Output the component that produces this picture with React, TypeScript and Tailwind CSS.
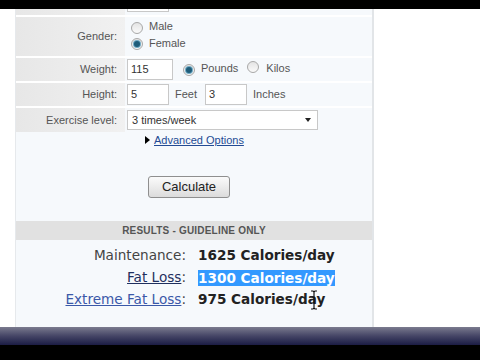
import React from 'react';

const formFont = { fontFamily: '"Liberation Sans", Arial, sans-serif' };
const resFont = { fontFamily: '"DejaVu Sans", Verdana, sans-serif' };

const Radio = ({ checked }: { checked?: boolean }) => (
  <span className="inline-flex w-[12px] h-[12px] rounded-full border border-[#a8a8a8] bg-gradient-to-b from-[#e4e4e4] to-[#fafafa] items-center justify-center shrink-0">
    {checked && <span className="w-[6px] h-[6px] rounded-full bg-[#1f5d7a] ring-1 ring-[#6fa9c4]" />}
  </span>
);

const Label = ({ children, h }: { children: React.ReactNode; h: string }) => (
  <div className={`w-[109px] ${h} shrink-0 bg-gradient-to-r from-[#e7e7e7] to-[#f1f1f1] flex items-center justify-end pr-[8px] text-[11px] text-[#555]`}>
    {children}
  </div>
);

export default function App() {
  return (
    <div className="w-[480px] h-[360px] bg-white flex flex-col overflow-hidden relative" style={formFont}>
      <div className="h-[9px] bg-black shrink-0" />
      <div className="flex flex-1 min-h-0">
        <div className="w-[15px] shrink-0" />
        <div className="w-[359px] bg-[#f6f9fc] border-l border-[#e6e9ec] border-r-2 border-r-[#e2e5e8] flex flex-col">
          {/* previous row tail */}
          <div className="flex border-b-2 border-white">
            <Label h="h-[6px]">{''}</Label>
            <div className="pl-[2px]">
              <div className="w-[42px] h-[3px] border border-t-0 border-[#c8c8c8] bg-white" />
            </div>
          </div>
          {/* gender */}
          <div className="flex border-b-2 border-white">
            <Label h="h-[39px]">Gender:</Label>
            <div className="flex flex-col justify-center pl-[6px] gap-[2px] text-[11px] text-[#555]">
              <div className="flex items-center gap-[6px]"><Radio /><span className="-mt-[4px]">Male</span></div>
              <div className="flex items-center gap-[6px]"><Radio checked /><span className="-mt-[2px]">Female</span></div>
            </div>
          </div>
          {/* weight */}
          <div className="flex border-b-2 border-white">
            <Label h="h-[23px]">Weight:</Label>
            <div className="flex items-center pl-[2px] text-[11px] text-[#555]">
              <div className="w-[46px] h-[21px] border border-[#c8c8c8] bg-white pl-[3px] flex items-center text-[#333]">115</div>
              <span className="ml-[10px]"><Radio checked /></span>
              <span className="ml-[6px] -mt-[2px]">Pounds</span>
              <span className="ml-[9px]"><Radio /></span>
              <span className="ml-[7px] -mt-[2px]">Kilos</span>
            </div>
          </div>
          {/* height */}
          <div className="flex border-b-2 border-white">
            <Label h="h-[23px]">Height:</Label>
            <div className="flex items-center pl-[2px] text-[11px] text-[#555]">
              <div className="w-[42px] h-[21px] border border-[#c8c8c8] bg-white pl-[3px] flex items-center text-[#333]">5</div>
              <span className="ml-[6px]">Feet</span>
              <div className="ml-[8px] w-[42px] h-[21px] border border-[#c8c8c8] bg-white pl-[3px] flex items-center text-[#333]">3</div>
              <span className="ml-[6px]">Inches</span>
            </div>
          </div>
          {/* exercise */}
          <div className="flex">
            <Label h="h-[24px]">Exercise level:</Label>
            <div className="flex items-center pl-[2px] text-[11px] text-[#333]">
              <div className="w-[191px] h-[20px] border border-[#c8c8c8] bg-white pl-[4px] pr-[6px] flex items-center justify-between">
                <span>3 times/week</span>
                <span className="w-0 h-0 border-l-[3px] border-r-[3px] border-t-[4px] border-l-transparent border-r-transparent border-t-[#222]" />
              </div>
            </div>
          </div>
          <div className="flex items-center pl-[129px] text-[11px]">
            <span className="w-0 h-0 border-t-[4px] border-b-[4px] border-l-[5px] border-t-transparent border-b-transparent border-l-black" />
            <span className="ml-[4px] text-[#234b94] underline">Advanced Options</span>
          </div>
          <div className="flex justify-center mt-[27px] pr-[10px]">
            <div className="w-[82px] h-[22px] rounded-[3px] border border-[#8f8f8f] bg-gradient-to-b from-[#fbfbfb] to-[#dcdcdc] flex items-center justify-center text-[13px] text-[#222]">
              Calculate
            </div>
          </div>
          <div className="mt-[23px] h-[19px] bg-[#e1e1e1] flex items-center justify-center text-[10px] font-bold text-[#555] tracking-[0.2px]">
            RESULTS - GUIDELINE ONLY
          </div>
          <div className="mt-[5px] flex flex-col text-[13.6px]" style={resFont}>
            <div className="flex items-center h-[22px]">
              <div className="w-[170px] text-right text-[#444]">Maintenance:</div>
              <div className="ml-[12px] font-bold text-[#222]">1625 Calories/day</div>
            </div>
            <div className="flex items-center h-[22px]">
              <div className="w-[170px] text-right text-[#444]"><span className="underline text-[#1f2f5e]">Fat Loss</span>:</div>
              <div className="ml-[12px] font-bold text-white bg-[#3399ff] leading-[16px]">1300 Calories/day</div>
            </div>
            <div className="flex items-center h-[22px] relative">
              <div className="w-[170px] text-right text-[#444]"><span className="underline text-[#3a58a8]">Extreme Fat Loss</span>:</div>
              <div className="ml-[12px] font-bold text-[#222]">975 Calories/day</div>
              <svg className="absolute left-[294px] top-[1px]" width="8" height="20" viewBox="0 0 8 20">
                <path d="M1 1h2l1 1 1-1h2M4 2v16M1 19h2l1-1 1 1h2" stroke="#111" strokeWidth="1.2" fill="none" />
              </svg>
            </div>
          </div>
        </div>
      </div>
      <div className="h-[18px] shrink-0 bg-gradient-to-b from-[#7b7b8e] via-[#454566] to-[#1c1c44]" />
      <div className="h-[15px] bg-black shrink-0" />
    </div>
  );
}
